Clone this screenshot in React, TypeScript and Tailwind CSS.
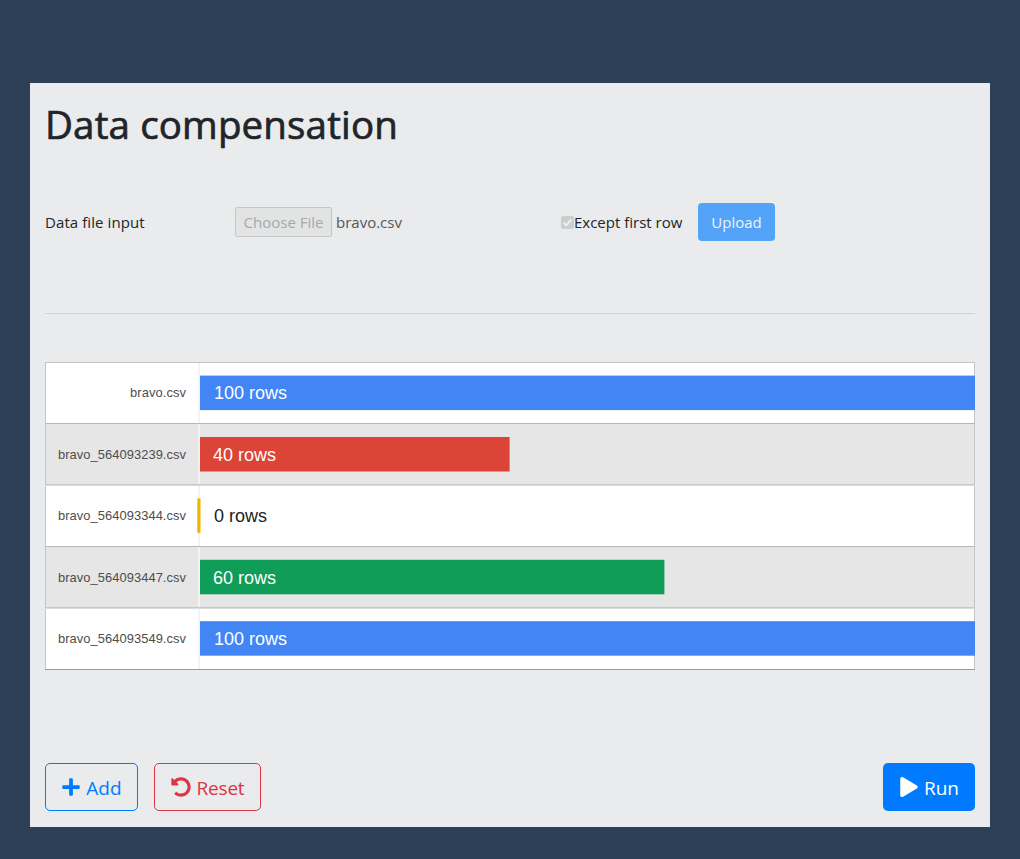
import { FaPlus, FaUndoAlt, FaPlay } from "react-icons/fa";

type Row = { name: string; count: number; color: string; dark?: boolean };

const rows: Row[] = [
  { name: "bravo.csv", count: 100, color: "#4285f4" },
  { name: "bravo_564093239.csv", count: 40, color: "#db4437" },
  { name: "bravo_564093344.csv", count: 0, color: "#f4b400", dark: true },
  { name: "bravo_564093447.csv", count: 60, color: "#0f9d58" },
  { name: "bravo_564093549.csv", count: 100, color: "#4285f4" },
];

const ROW_HEIGHT = 61.4;
const LABEL_WIDTH = 155;
const BAR_AREA = 775;

function Timeline() {
  return (
    <svg width="930" height="308" viewBox="0 0 930 308" className="block font-['Liberation_Sans',Arial,sans-serif]">
      {rows.map((row, i) => (
        <rect key={i} x="0" y={i * ROW_HEIGHT + 0.5} width="930" height={ROW_HEIGHT} fill={i % 2 ? "#e6e6e6" : "#ffffff"} />
      ))}
      <rect x="153" y="1" width="2" height="306" fill="#f3f3f3" />
      <rect x="0.5" y="0.5" width="929" height="307" fill="none" stroke="#c4c5c6" />
      <rect x="0" y="61" width="930" height="1" fill="#b7b7b7" />
      <rect x="0" y="122" width="930" height="1" fill="#c8c8c8" />
      <rect x="0" y="123" width="930" height="1" fill="#dcdcdc" />
      <rect x="0" y="184" width="930" height="1" fill="#b7b7b7" />
      <rect x="0" y="245" width="930" height="1" fill="#c8c8c8" />
      <rect x="0" y="246" width="930" height="1" fill="#dcdcdc" />
      <rect x="0" y="307" width="930" height="1" fill="#9a9a9a" />
      {rows.map((row, i) => {
        const y = 13.6 + i * ROW_HEIGHT;
        const width = (row.count / 100) * (BAR_AREA - 1) + (row.count === 100 ? 1 : 0);
        const shift = Math.ceil(i * 61.5);
        return (
          <g key={i}>
            <rect x={row.count ? LABEL_WIDTH : 152.3} y={y} width={row.count ? width : 3.2} height="34.5" fill={row.color} />
            <text x="141" y={35 + shift} textAnchor="end" textLength={i ? 128 : 56} className="text-[12.9px]" fill="#4d4d4d">
              {row.name}
            </text>
            <text x={row.count === 40 || row.count === 60 ? 168 : 169} y={37 + shift} className="text-[18px]" fill={row.dark ? "#222222" : "#ffffff"}>
              {row.count} rows
            </text>
          </g>
        );
      })}
    </svg>
  );
}

export default function App() {
  return (
    <div className="h-[859px] w-[1020px] bg-[#2e4057] px-[30px] pt-[83px] font-['Open_Sans','Noto_Sans',sans-serif] text-[#212529]">
      <main className="h-[744px] bg-[#eaebed] px-[15px] pt-4">
        <h1 className="h-[56px] text-[38.5px] leading-[51px] font-medium tracking-[0.15px] whitespace-nowrap [-webkit-text-stroke:0.7px_#212529]">
          Data compensation
        </h1>

        <div className="mt-12 flex h-[38px] items-center text-[15px] whitespace-nowrap">
          <label className="w-[190px] tracking-[0.08px]">Data file input</label>
          <div className="flex w-[326px] items-center gap-1">
            <button disabled className="h-[30px] w-[97px] rounded-[2px] border border-[#c5c6c7] bg-[#e2e4e4] text-[#a5a8ac]">
              Choose File
            </button>
            <span className="text-[#54575b]">bravo.csv</span>
          </div>
          <span className="flex h-[13px] w-[13px] items-center justify-center rounded-[2px] bg-[#cccdce]">
            <svg width="13" height="13" viewBox="0 0 13 13" fill="none" stroke="#eeeff0" strokeWidth="2">
              <path d="M2.5 6.8 5.2 9.4 10.4 3.4" />
            </svg>
          </span>
          <span className="w-[124px]">Except first row</span>
          <button disabled className="h-[38px] w-[77px] rounded-[4px] bg-[#53a3f9] text-[#eef3fa]">
            Upload
          </button>
        </div>

        <hr className="mt-[72px] mb-12 border-[#d2d3d5]" />

        <Timeline />

        <div className="mt-[93px] flex h-12 gap-4 text-[19px]">
          <button className="flex w-[93px] items-center justify-center gap-[5px] rounded-[5px] border border-[#007bff] text-[#007bff]">
            <FaPlus size={20} />
            <span className="pt-[2px]">Add</span>
          </button>
          <button className="flex w-[107px] items-center justify-center gap-[6px] rounded-[5px] border border-[#dc3545] text-[#dc3545]">
            <FaUndoAlt size={20} />
            <span className="pt-[2px] tracking-[-0.2px]">Reset</span>
          </button>
          <button className="ml-auto flex w-[92px] items-center justify-center gap-[5px] rounded-[5px] bg-[#007bff] text-white">
            <FaPlay size={20} />
            <span className="pt-[2px]">Run</span>
          </button>
        </div>
      </main>
    </div>
  );
}
